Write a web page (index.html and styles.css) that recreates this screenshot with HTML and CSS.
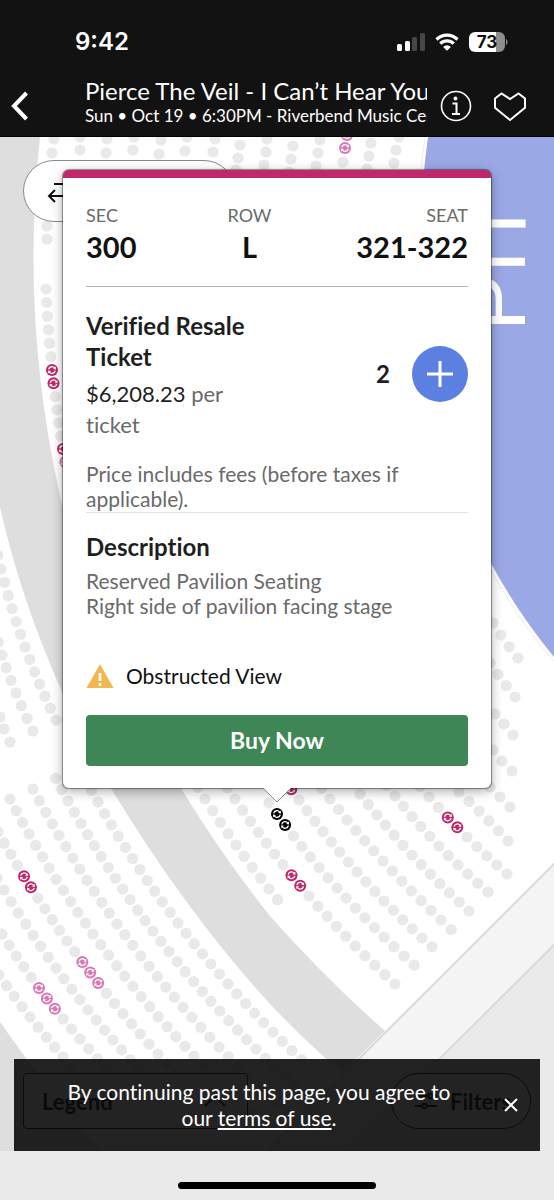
FILE: index.html
```html
<!DOCTYPE html>
<html lang="en">
<head>
<meta charset="utf-8">
<meta name="viewport" content="width=device-width, initial-scale=1">
<title>Pierce The Veil - Select Seats</title>
<link rel="stylesheet" href="styles.css">
</head>
<body>
<header class="top">
  <div class="status">
    <time class="clock">9:42</time>
    <div class="status-icons">
      <svg width="28" height="20" viewBox="0 0 28 20" aria-hidden="true">
        <rect x="0" y="12" width="5" height="7" rx="1.5" fill="#fff"/>
        <rect x="8" y="9" width="5" height="10" rx="1.5" fill="#fff"/>
        <rect x="15" y="5" width="5" height="14" rx="1.5" fill="#464646"/>
        <rect x="23" y="1" width="5" height="18" rx="1.5" fill="#464646"/>
      </svg>
      <svg width="24" height="18" viewBox="0 0 24 18" aria-hidden="true">
        <path d="M1.5 6.5a15 15 0 0 1 21 0M5.3 10.6a9.6 9.6 0 0 1 13.4 0" fill="none" stroke="#fff" stroke-width="3.2"/>
        <path d="M12 17.8l-3.9-3.9a5.6 5.6 0 0 1 7.8 0z" fill="#fff"/>
      </svg>
      <svg width="40" height="20" viewBox="0 0 40 20" role="img" aria-label="Battery 73">
        <path d="M6 0h21v20H6a6 6 0 0 1-6-6V6a6 6 0 0 1 6-6z" fill="#fff"/>
        <path d="M27 0h3a6 6 0 0 1 6 6v8a6 6 0 0 1-6 6h-3z" fill="#8e8e8e"/>
        <path d="M37 7c2 .6 2 5.400 0 6z" fill="#8e8e8e"/>
        <text x="18" y="16" text-anchor="middle" class="battery-text">73</text>
      </svg>
    </div>
  </div>
  <div class="event">
    <button class="icon-btn back" aria-label="Back">
      <svg width="20" height="30" viewBox="0 0 20 30"><path d="M16.500 2 4 15l12.500 13" fill="none" stroke="#fff" stroke-width="4"/></svg>
    </button>
    <div class="event-text">
      <h1>Pierce The Veil - I Can’t Hear You</h1>
      <p>Sun • Oct 19 • 6:30PM - Riverbend Music Center</p>
    </div>
    <button class="icon-btn" aria-label="Event info">
      <svg width="32" height="32" viewBox="0 0 32 32"><circle cx="16" cy="16" r="14.500" fill="none" stroke="#fff" stroke-width="1.600"/><circle cx="15.500" cy="8.500" r="1.900" fill="#fff"/><path d="M12.500 13.500h4v10M12 24h8" fill="none" stroke="#fff" stroke-width="2"/></svg>
    </button>
    <button class="icon-btn" aria-label="Favorite">
      <svg width="34" height="32" viewBox="0 0 34 32"><path d="M2 8.500 8.500 3.500 17 9l8.500-5.500L32 8.500v9.300L17 30 2 17.800z" fill="none" stroke="#fff" stroke-width="2"/></svg>
    </button>
  </div>
</header>

<main class="map">
  <svg class="map-art" viewBox="0 137 554 1014" preserveAspectRatio="xMidYMin slice" role="img" aria-label="Seat map">
    <defs>
      <g id="resale">
        <circle r="6"/>
        <path d="M-3.300-.6A3.400 3.400 0 0 1 2.800-1.900M3.300.6A3.400 3.400 0 0 1-2.800 1.900" fill="none" stroke="#fff" stroke-width="1.300"/>
        <path d="M3.900-3.400v3L1-.9zM-3.900 3.400v-3L-1 .9z" fill="#fff"/>
      </g>
    </defs>
    <rect y="137" width="554" height="1014" fill="#fff"/>
    <path fill="#dedede" d="M0 137H40Q20 320 61 500C90 610 130 700 182 790Q223 857 270 916Q325 978 385 1031L342 1073Q300 1036 270 1004Q186 912 112 790Q80 740 62 692Q20 597 0 507Z"/>
    <path fill="#dedede" d="M0 1022Q55 1100 100 1151H0Z"/>
    <path fill="#eaeaea" d="M554 864V1151H264Z"/>
    <path fill="#f4f4f4" stroke="#dadada" stroke-width="2" d="M560 858 260 1158H340L560 939Z"/>
    <path fill="#9aa8e5" d="M428 137Q400 330 492 565Q518 613 554 657V137Z"/>
    <path fill="none" stroke="#e9edfa" stroke-width="1" d="M425 137Q397 330 489 567Q515 615 553 661"/>
    <text class="pit" transform="translate(525 331) rotate(-90)">PIT</text>
    <g id="seats"></g>
  </svg>

  <button class="swap" aria-label="Switch view">
    <svg width="28" height="24" viewBox="0 0 28 24"><path d="M7 5h18M21 0l5 5-5 5M2 17h18M8 11l-6 6 6 6" fill="none" stroke="#111" stroke-width="2"/></svg>
  </button>

  <section class="ticket" aria-label="Selected ticket">
    <dl class="place">
      <div><dt>SEC</dt><dd>300</dd></div>
      <div class="mid"><dt>ROW</dt><dd>L</dd></div>
      <div class="end"><dt>SEAT</dt><dd>321-322</dd></div>
    </dl>
    <div class="offer">
      <div class="offer-text">
        <h2>Verified Resale Ticket</h2>
        <p class="price"><strong>$6,208.23</strong> per ticket</p>
      </div>
      <div class="stepper">
        <output>2</output>
        <button class="plus" aria-label="Add ticket">
          <svg width="26" height="26" viewBox="0 0 26 26"><path d="M13 0v26M0 13h26" stroke="#fff" stroke-width="3"/></svg>
        </button>
      </div>
    </div>
    <p class="note">Price includes fees (before taxes if applicable).</p>
    <h2 class="desc-title">Description</h2>
    <p class="desc">Reserved Pavilion Seating<br>Right side of pavilion facing stage</p>
    <p class="warning">
      <svg width="28" height="26" viewBox="0 0 28 26" aria-hidden="true"><path d="M14 1l13.500 24H.5z" fill="#f2b84f"/><path d="M14 10v8M14 20v3" stroke="#fff" stroke-width="2.600"/></svg>
      Obstructed View
    </p>
    <button class="buy">Buy Now</button>
    <svg class="pointer" width="30" height="16" viewBox="0 0 30 16" aria-hidden="true"><path d="M0 0h30L15 15z" fill="#fff"/><path d="M1 1l14 14L29 1" fill="none" stroke="#8a8a8a"/></svg>
  </section>

  <div class="controls">
    <button class="legend">Legend
      <svg width="22" height="14" viewBox="0 0 22 14"><path d="M1 12 11 2l10 10" fill="none" stroke="#000" stroke-width="2"/></svg>
    </button>
    <button class="filters">
      <svg width="22" height="18" viewBox="0 0 22 18"><g fill="none" stroke="#000" stroke-width="2"><path d="M0 4h13M18 4h4M0 14h7M12 14h10"/><circle cx="15.500" cy="4" r="2.300"/><circle cx="9.500" cy="14" r="2.300"/></g></svg>
      Filters
    </button>
  </div>

  <aside class="terms">
    <p>By continuing past this page, you agree to our <a href="#terms">terms of use</a>.</p>
    <button class="close" aria-label="Dismiss">
      <svg width="14" height="14" viewBox="0 0 14 14"><path d="M1 1l12 12M13 1 1 13" stroke="#fff" stroke-width="2"/></svg>
    </button>
  </aside>
</main>
<footer class="home"><span></span></footer>
<script src="seats.js"></script>
</body>
</html>
```
FILE: styles.css
```css
* { box-sizing: border-box; }
body {
  margin: 0;
  min-height: 100vh;
  display: flex;
  flex-direction: column;
  background: #eaeaea;
  color: #1f1f1f;
  font-family: Lato, "Open Sans", sans-serif;
  font-size: 21px;
  font-variant-ligatures: none;
}
h1, h2, p, dl, dd { margin: 0; }
button { font: inherit; color: inherit; border: 0; padding: 0; background: none; cursor: pointer; }
svg { display: block; flex: none; }

.top { background: #121212; color: #fff; padding-bottom: 9px; border-bottom: 1px solid #000; }
.status { display: flex; justify-content: space-between; align-items: center; padding: 27px 45px 0 75px; }
.clock { font: 600 24px/30px Inter, sans-serif; }
.status-icons { display: flex; align-items: center; gap: 10px; }
.battery-text { font: 700 17px Inter, sans-serif; fill: #121212; }
.event { display: flex; align-items: center; padding: 20px 27px 0 10px; }
.back { margin-right: 55px; }
.event-text { flex: 1; min-width: 0; margin-right: 13px; }
.event-text h1, .event-text p { white-space: nowrap; overflow: hidden; }
.event-text h1 { font-size: 24px; font-weight: 400; line-height: 28px; }
.event-text p { font-size: 17px; line-height: 22px; }
.icon-btn { padding-top: 8px; }
.icon-btn + .icon-btn { margin-left: 21px; }

.map { position: relative; flex: 1; display: flex; flex-direction: column; overflow: hidden; }
.map-art { position: absolute; inset: 0; width: 100%; height: 100%; }
.pit { font: 86px "Liberation Sans", Arial, sans-serif; fill: #fff; }
.swap {
  position: absolute; left: 23px; top: 23px; width: 212px; height: 62px;
  padding-left: 23px; border: 1px solid #8a8a8a; border-radius: 31px; background: #fff;
}

.ticket {
  position: relative;
  margin: 33px 63px 80px;
  padding: 27px 23px 22px;
  border-top: 8px solid #c0286c;
  border-radius: 6px;
  background: #fff;
  box-shadow: 0 0 1px 1px rgba(0, 0, 0, .4), 0 3px 12px rgba(0, 0, 0, .35);
}
.place { display: grid; grid-template-columns: 1fr 1fr 1fr; padding-bottom: 22px; border-bottom: 1px solid #b4b4b4; }
.place dt { font-size: 18px; line-height: 20px; color: #6a6a6a; }
.place dd { margin-top: 5px; font-size: 29px; font-weight: 700; line-height: 34px; color: #121212; }
.mid { justify-self: center; margin-right: 55px; text-align: center; }
.end { text-align: right; }
.offer { display: flex; justify-content: space-between; align-items: center; padding-top: 23px; }
.offer-text { width: 180px; line-height: 31px; }
h2 { font-size: 24px; font-weight: 700; }
.price { margin-top: 6px; font-size: 22px; color: #6a6a6a; }
.price strong { font-weight: 400; color: #1f1f1f; }
.stepper { display: flex; align-items: center; gap: 22px; padding-bottom: 3px; }
.stepper output { font-size: 24px; font-weight: 700; }
.plus { display: grid; place-items: center; width: 56px; height: 56px; border-radius: 50%; background: #5b80e0; }
.note { margin-top: 21px; padding-bottom: 1px; line-height: 25px; color: #6a6a6a; border-bottom: 1px solid #e2e2e2; }
.desc-title { margin-top: 19px; line-height: 30px; }
.desc { margin-top: 6px; line-height: 25px; color: #6a6a6a; }
.warning { display: flex; align-items: center; gap: 12px; margin-top: 45px; line-height: 26px; color: #121212; }
.buy { display: block; width: 100%; margin-top: 26px; border-radius: 4px; background: #3e8655; color: #fff; font-size: 23px; font-weight: 700; line-height: 51px; }
.pointer { position: absolute; left: 50%; top: 100%; margin: -1px 0 0 -15px; }

.controls { position: relative; display: flex; justify-content: space-between; margin-top: auto; padding: 0 23px 22px; color: #000; font-weight: 700; font-size: 22px; }
.legend { display: flex; align-items: center; justify-content: space-between; width: 225px; height: 56px; padding: 0 21px 0 18px; border: 1px solid #000; border-radius: 4px; background: #fff; }
.filters { display: flex; align-items: center; gap: 13px; width: 140px; height: 56px; padding-left: 23px; border: 1px solid #000; border-radius: 28px; background: #fff; }
.terms {
  position: absolute; left: 14px; right: 14px; bottom: 0; height: 92px;
  display: flex; align-items: center; padding-right: 22px;
  background: rgba(11, 11, 11, .9); color: #fff;
}
.terms p { flex: 1; padding: 0 44px; text-align: center; line-height: 26px; }
.terms a { color: inherit; }
.home { display: flex; justify-content: center; padding: 31px 0 11px; }
.home span { width: 198px; height: 7px; border-radius: 4px; background: #000; }
```
FILE: seats.js
```js
// Each row: three seats on the curve (first, middle, last), the number of
// seat steps between the first and the last, then the first and last index drawn.
const rows = [
  [98,802, 178,923, 273,1032, 22, -1, 25],
  [68,801, 153,931, 256,1049, 24, -2, 30],
  [33,789, 117,924, 219,1047, 24, 0, 31],
  [10,799, 93,934, 194,1056, 24, 0, 30],
  [-2,832, 67,941, 149,1044, 20, 0, 27, {4:"r",5:"r",12:"l",13:"l",14:"l"}],
  [4,890, 56,968, 113,1040, 14, -1, 21],
  [2,934, 39,988, 80,1039, 10, 0, 17, {5:"l",6:"l",7:"l"}],
  [-1,975, 30,1017, 63,1057, 8, 0, 13],
  [1,569, 25,647, 56,720, 12, -1, 12],
  [2,655, 16,693, 33,731, 6, -1, 6],
  [0,717, 4,729, 10,742, 2, 0, 2],
  [46,289, 52,370, 63,449, 12, 0, 13, {6:"r",7:"r",12:"r",13:"l"}],
  [47,226, 47,232, 47,239, 1, 0, 1],
  [54,139, 53,146, 52,153, 1, 0, 1],
  [80,137, 80,144, 80,150, 1, 0, 1],
  [107,139, 106,146, 106,153, 1, 0, 1],
  [134,137, 133,144, 133,150, 1, 0, 1],
  [161,140, 160,147, 159,154, 1, 0, 1],
  [187,137, 186,144, 185,151, 1, 0, 1],
  [215,139, 214,146, 213,152, 1, 0, 1],
  [240,145, 238,158, 236,170, 2, 0, 2],
  [267,139, 266,152, 264,165, 2, 0, 2],
  [293,146, 291,159, 289,172, 2, 0, 2],
  [320,140, 318,153, 316,166, 2, 0, 2],
  [347,135, 345,148, 343,162, 2, 0, 2, {0:"l",1:"l"}],
  [371,143, 369,156, 367,169, 2, 0, 2],
  [399,137, 396,150, 394,163, 2, 0, 2],
  [493,623, 505,641, 518,658, 3, 0, 3],
  [490,663, 502,680, 515,697, 3, 0, 3],
  [495,714, 504,724, 513,735, 2, 0, 2],
  [493,750, 502,761, 512,771, 2, 0, 2],
  [490,787, 500,797, 510,807, 2, 0, 2],
  [459,792, 484,816, 508,841, 5, 0, 5],
  [429,797, 467,837, 507,874, 8, -1, 8, {2:"r",3:"r"}],
  [395,796, 439,846, 488,892, 10, -1, 10],
  [360,794, 412,855, 469,911, 12, 0, 12],
  [330,799, 383,861, 441,920, 12, -1, 13],
  [299,800, 357,872, 422,938, 14, -1, 15, {"-1":"r"}],
  [277,814, 337,888, 404,956, 14, -1, 15, {0:"s",1:"s"}],
  [235,799, 309,896, 395,984, 18, -1, 18, {7:"r",8:"r"}],
  [205,799, 236,845, 269,889, 8, -1, 9]
];
const fills = { r: "#c0286c", l: "#d977b4", s: "#000" };

const point = (a, m, b, t) => {
  const c = 2 * m - (a + b) / 2;
  return ((1 - t) * (1 - t) * a + 2 * t * (1 - t) * c + t * t * b).toFixed(1);
};

document.getElementById("seats").innerHTML = rows.map(
  ([x0, y0, xm, ym, x1, y1, steps, from, to, marks = {}]) => {
    let out = "";
    for (let i = from; i <= to; i++) {
      const x = point(x0, xm, x1, i / steps);
      const y = point(y0, ym, y1, i / steps);
      out += marks[i]
        ? `<use href="#resale" x="${x}" y="${y}" fill="${fills[marks[i]]}"/>`
        : `<circle cx="${x}" cy="${y}" r="5.600" fill="#e9e9e9"/>`;
    }
    return out;
  }
).join("");
```
